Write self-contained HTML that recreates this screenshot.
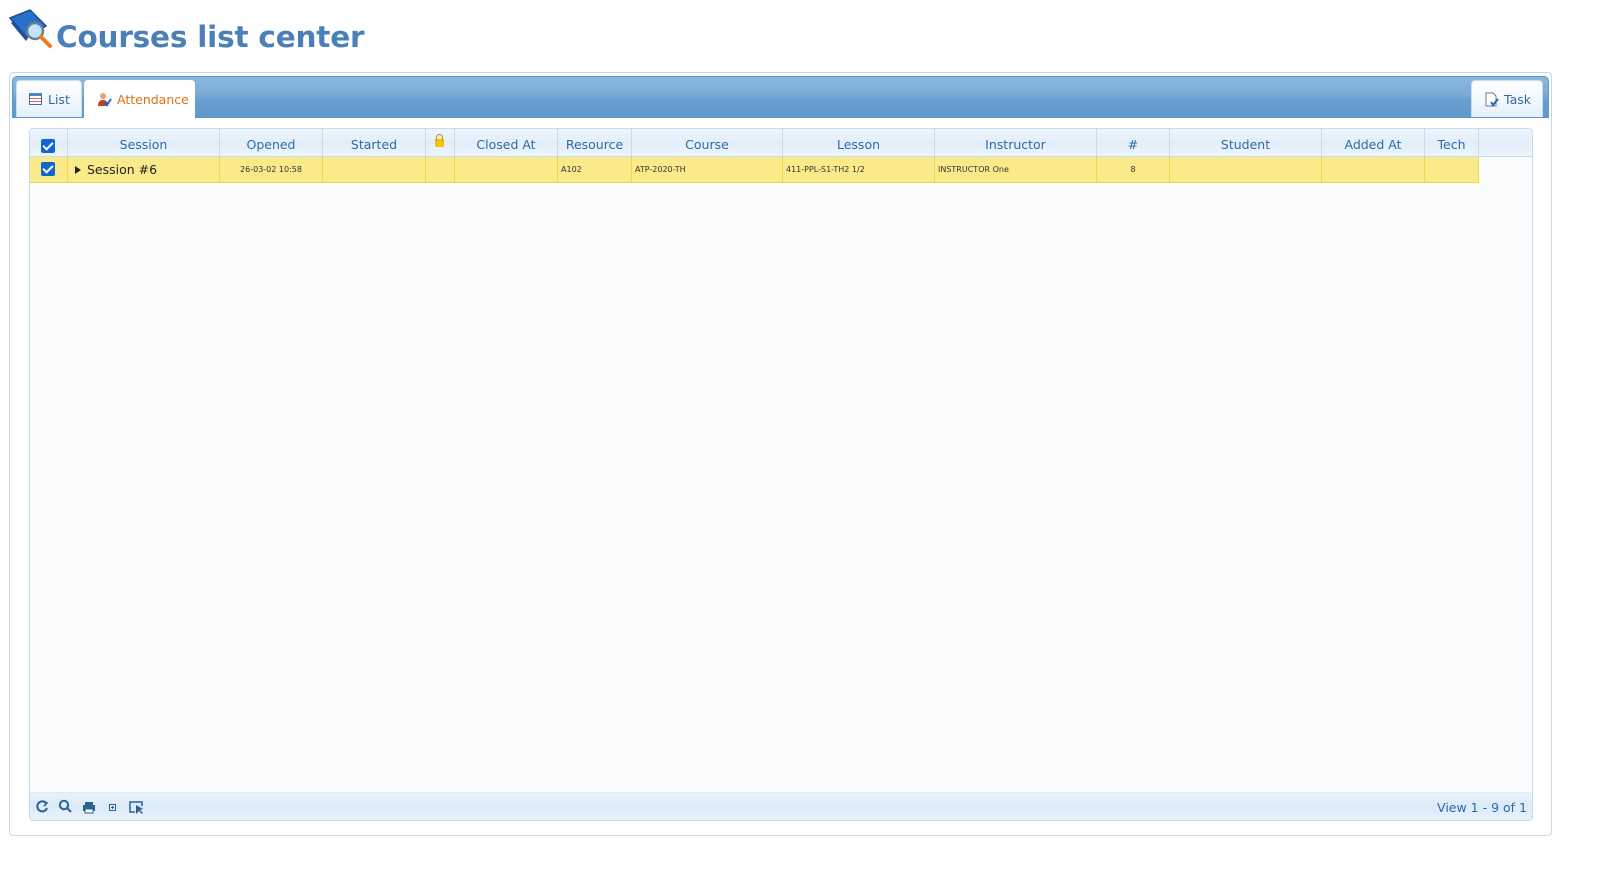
<!DOCTYPE html>
<html><head><style>
*{box-sizing:border-box;margin:0;padding:0}
body{width:1601px;height:876px;background:#fff;font-family:"DejaVu Sans","Liberation Sans",sans-serif;position:relative;overflow:hidden}
.title{position:absolute;left:56px;top:20px;font:bold 29.5px "DejaVu Sans",sans-serif;color:#4a7fb8;letter-spacing:-0.2px}
.panel{position:absolute;left:9px;top:72px;width:1543px;height:764px;border:1px solid #c5d8ea;border-radius:4px;background:#fff}
.bar{position:absolute;left:12px;top:76px;width:1537px;height:42px;border:1px solid #5d97cc;border-radius:5px 5px 0 0;background:linear-gradient(#8cb8dc,#7aaad4 45%,#6aa0cf 55%,#5f98cb)}
.tab{position:absolute;top:80px;height:37px;border:1px solid #c7dcef;border-bottom:none;border-radius:4px 4px 0 0;background:linear-gradient(#fff,#e6f0fa);font-size:12.5px;color:#2e6aa5;display:flex;align-items:center;padding-left:12px}
.grid{position:absolute;left:29px;top:128px;width:1504px;height:693px;border:1px solid #c5dbee;border-radius:4px;background:#fbfcfd;overflow:hidden}
.hdr{position:absolute;left:0;top:0;height:28px;width:1502px;background:linear-gradient(#eff6fd,#e2eefa 50%,#edf5fd);border-bottom:1px solid #c5dbee}
.c{position:absolute;top:0;height:100%;border-right:1px solid #c5dbee;font-size:12.5px;color:#2e6aa5;text-align:center;line-height:32px}
.row{position:absolute;left:0;top:28px;height:26px;width:1449px;background:#fbea8a;border-bottom:1px solid #f1d54a}
.r{position:absolute;top:0;height:100%;border-right:1px solid #f1d54a;font-size:8px;color:#333;line-height:25px;padding-left:3px}
.cb{position:absolute;width:14px;height:14px;background:#1565d0;border-radius:2px}
.cb:after{content:"";position:absolute;left:4px;top:1px;width:4px;height:8px;border:solid #fff;border-width:0 2px 2px 0;transform:rotate(45deg)}
.foot{position:absolute;left:0;bottom:0;width:1502px;height:28px;background:linear-gradient(#e8f2fc,#dceaf8 50%,#e8f2fc);border-top:1px solid #dfeaf5}
</style></head><body>
<svg style="position:absolute;left:8px;top:8px" width="48" height="42" viewBox="0 0 48 42">
<path d="M2 10 L22 2 L38 18 L18 30 Z" fill="#2a6fc9" stroke="#174a94" stroke-width="1.5"/>
<path d="M6 13 L20 30 L18 33 L3 15 Z" fill="#1d4e9a"/>
<circle cx="27" cy="23" r="8" fill="#bfe4fb" stroke="#6a7d8d" stroke-width="2.5"/>
<path d="M33 29 L42 38" stroke="#f07a1d" stroke-width="4" stroke-linecap="round"/>
</svg>
<div class="title">Courses list center</div>
<div class="panel"></div>
<div class="bar"></div>
<div class="tab" style="left:16px;width:66px"><span style="display:inline-block;width:13px;height:12px;border:1px solid #3a6ea5;background:repeating-linear-gradient(#fff 0 2px,#e06060 2px 3px);border-top:3px solid #4a86c8;margin-right:6px"></span>List</div>
<div class="tab" style="left:84px;width:111px;background:#fff;border-color:#fff;color:#e07010;height:38px"><svg width="15" height="15" viewBox="0 0 15 15" style="margin-right:5px"><circle cx="6" cy="4" r="3" fill="#f0a060"/><path d="M1 14 Q1 8 6 8 Q11 8 11 14Z" fill="#c04020"/><path d="M8 10 L10 13 L14 7" stroke="#1565d0" stroke-width="2" fill="none"/></svg>Attendance</div>
<div class="tab" style="left:1471px;width:72px"><svg width="15" height="15" viewBox="0 0 15 15" style="margin-right:5px"><path d="M2 1H9L12 4V14H2Z" fill="#fff" stroke="#777"/><path d="M7 10 L9 13 L14 7" stroke="#1565d0" stroke-width="2" fill="none"/></svg>Task</div>
<div class="grid">
<div class="hdr">
<div class="c" style="left:0;width:38px"><span class="cb" style="left:11px;top:10px"></span></div>
<div class="c" style="left:38px;width:152px">Session</div>
<div class="c" style="left:190px;width:103px">Opened</div>
<div class="c" style="left:293px;width:103px">Started</div>
<div class="c" style="left:396px;width:29px"><span style="position:absolute;left:9px;top:10px;width:9px;height:8px;background:#f5c400;border-radius:1px"></span><span style="position:absolute;left:10px;top:5px;width:7px;height:7px;border:1.5px solid #c09000;border-bottom:none;border-radius:4px 4px 0 0"></span></div>
<div class="c" style="left:425px;width:103px">Closed At</div>
<div class="c" style="left:528px;width:74px">Resource</div>
<div class="c" style="left:602px;width:151px">Course</div>
<div class="c" style="left:753px;width:152px">Lesson</div>
<div class="c" style="left:905px;width:162px">Instructor</div>
<div class="c" style="left:1067px;width:73px">#</div>
<div class="c" style="left:1140px;width:152px">Student</div>
<div class="c" style="left:1292px;width:103px">Added At</div>
<div class="c" style="left:1395px;width:54px">Tech</div>
</div>
<div class="row">
<div class="r" style="left:0;width:38px"><span class="cb" style="left:11px;top:5px"></span></div>
<div class="r" style="left:38px;width:152px;font-size:12.5px;color:#222;padding-left:7px"><span style="display:inline-block;border-left:6px solid #222;border-top:4px solid transparent;border-bottom:4px solid transparent;margin-right:6px;vertical-align:0"></span>Session #6</div>
<div class="r" style="left:190px;width:103px;text-align:center;padding:0">26-03-02 10:58</div>
<div class="r" style="left:293px;width:103px"></div>
<div class="r" style="left:396px;width:29px"></div>
<div class="r" style="left:425px;width:103px"></div>
<div class="r" style="left:528px;width:74px">A102</div>
<div class="r" style="left:602px;width:151px">ATP-2020-TH</div>
<div class="r" style="left:753px;width:152px">411-PPL-S1-TH2 1/2</div>
<div class="r" style="left:905px;width:162px">INSTRUCTOR One</div>
<div class="r" style="left:1067px;width:73px;text-align:center;padding:0">8</div>
<div class="r" style="left:1140px;width:152px"></div>
<div class="r" style="left:1292px;width:103px"></div>
<div class="r" style="left:1395px;width:54px"></div>
</div>
<div class="foot">
<svg style="position:absolute;left:5px;top:6px" width="120" height="16" viewBox="0 0 120 16" fill="none" stroke="#2a6296" stroke-width="2">
<path d="M11 4 A5 5 0 1 0 12 9"/><path d="M8 2 L12 4 L9 7" stroke-width="1.6"/>
<circle cx="29" cy="6" r="4.2"/><path d="M32 9 L36 13"/>
<rect x="48" y="6" width="12" height="6" fill="#2a6296" stroke="none"/><rect x="50" y="3" width="8" height="4" fill="#2a6296" stroke="none"/><rect x="50" y="10" width="8" height="4" fill="#fff" stroke="#2a6296" stroke-width="1"/>
<rect x="74.5" y="5.5" width="6" height="6" stroke-width="1"/><path d="M77.5 7 V10 M76 8.5 H79" stroke-width="1"/>
<path d="M100 13 H95 V3 H107 V7" stroke-width="1.5"/><path d="M101 6 L101 15 L104 12 L107 15 L108 14 L105 11 L108 10 Z" fill="#2a6296" stroke="none"/>
</svg>
<div style="position:absolute;right:5px;top:7px;font-size:12.5px;color:#2e6aa5">View 1 - 9 of 1</div>
</div>
</div>
</body></html>
